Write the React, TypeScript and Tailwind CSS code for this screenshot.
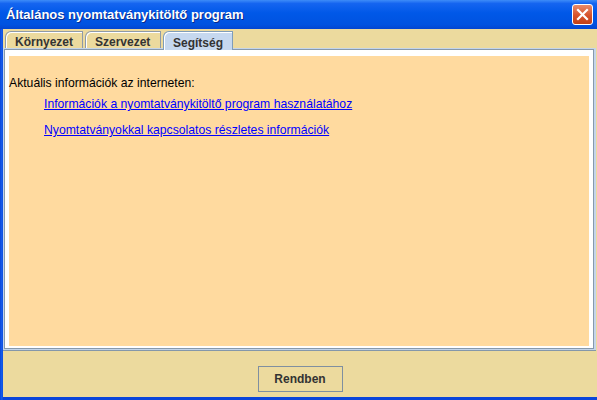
import React from 'react';

const tabs = ['Környezet', 'Szervezet', 'Segítség'];

const App: React.FC = () => {
    const active = 2;

    return (
        <div className="w-[597px] h-[400px] flex flex-col bg-[#0A3FD8] overflow-hidden font-['Liberation_Sans',Arial,sans-serif]">
            {/* Title bar */}
            <div className="h-[29px] flex items-center justify-between pl-[6px] pr-[4px] bg-[linear-gradient(to_bottom,#3D8CF8_0%,#1565F0_12%,#0058E8_45%,#0052E0_85%,#0345D0_100%)]">
                <span className="text-white font-bold text-[13px] [text-shadow:1px_1px_0_#0A2A8A]">Általános nyomtatványkitöltő program</span>
                <button className="w-[21px] h-[21px] rounded-[3px] border border-white bg-[linear-gradient(to_bottom,#E98B6A,#D6532C_55%,#C24016)] flex items-center justify-center">
                    <svg width="13" height="13" viewBox="0 0 13 13">
                        <path d="M2 2 L11 11 M11 2 L2 11" stroke="white" strokeWidth="2.2" strokeLinecap="square" />
                    </svg>
                </button>
            </div>

            <div className="flex-1 flex pl-[3px] pb-[3px] bg-[linear-gradient(to_right,#0A45DA,#1660EE_2px,#0A45DA_3px)]">
                <div className="flex-1 bg-[#ECDA9E] flex flex-col">
                    {/* Tabs */}
                    <div className="h-[19px] flex items-end pl-[2px] gap-[2px] relative z-10">
                        {tabs.map((t, i) => (
                            i === active ? (
                                <div key={t} className="h-[19px] -mb-[2px] px-[9px] rounded-tl-[6px] border border-b-0 border-[#7F9DB9] bg-[#C6D8EF] shadow-[inset_1px_1px_0_#FFFFFF] text-[12px] font-bold text-[#333333] flex items-start pt-[2px]">
                                    {t}
                                </div>
                            ) : (
                                <div key={t} className={`h-[17px] ${i === 0 ? 'w-[78px]' : 'w-[76px]'} px-[9px] rounded-tl-[6px] border border-b-0 border-[#8E9AA8] bg-[#ECDA9E] shadow-[inset_1px_1px_0_#FFFFFF] text-[12px] font-bold text-[#333333] flex items-start pt-[1px]`}>
                                    {t}
                                </div>
                            )
                        ))}
                    </div>

                    {/* Panel */}
                    <div className="h-[303px] mr-[1px] pt-[1px] pl-[1px] pr-[2px] pb-[1px] bg-[#C4D5EA] border-b border-[#8497AA] flex flex-col">
                        <div className="flex-1 border border-[#8799AC] bg-white pt-[6px] px-[4px] pb-[2px] flex flex-col">
                            <div className="flex-1 bg-[#FFDA9F] pt-[20px] text-[12.2px] leading-[14px] text-black">
                                <div>Aktuális információk az interneten:</div>
                                <div className="pl-[35px] mt-[7px] flex flex-col gap-[12px]">
                                    <a href="#" className="text-[#0000FF] underline">Információk a nyomtatványkitöltő program használatához</a>
                                    <a href="#" className="text-[#0000FF] underline">Nyomtatványokkal kapcsolatos részletes információk</a>
                                </div>
                            </div>
                        </div>
                    </div>

                    {/* Buttons */}
                    <div className="flex-1 flex justify-center pt-[15px]">
                        <button className="w-[85px] h-[26px] border border-[#7F8FA0] bg-[#ECDA9E] text-[12px] font-bold text-[#333333]">
                            Rendben
                        </button>
                    </div>
                </div>
            </div>
        </div>
    );
};

export default App;
